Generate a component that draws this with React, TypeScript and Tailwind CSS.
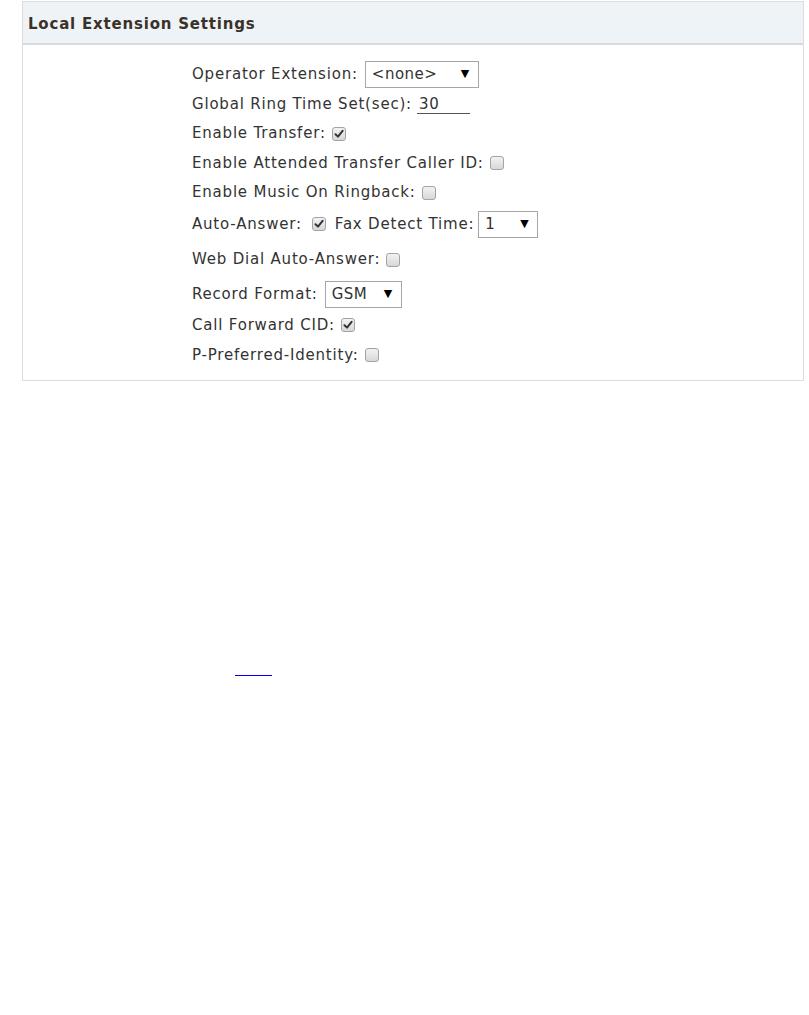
import React from "react";

function Box({ checked, gap = "ml-[6px]" }: { checked?: boolean; gap?: string }) {
  return (
    <span className={`${gap} inline-flex h-[14px] w-[14px] items-center justify-center rounded-[3px] border border-[#a3a3a3] bg-gradient-to-b from-[#f2f2f2] to-[#d8d8d8] align-middle`}>
      {checked && (
        <svg width="10" height="10" viewBox="0 0 10 10">
          <path d="M1.5 5.2 L4 7.6 L8.6 1.8" fill="none" stroke="#333" strokeWidth="2" strokeLinecap="round" strokeLinejoin="round" />
        </svg>
      )}
    </span>
  );
}

function Select({ value, width }: { value: string; width: string }) {
  return (
    <span className={`ml-[7px] inline-flex h-[27px] items-center justify-between border border-[#a6a6a6] bg-white pl-[6px] pr-[8px] tracking-[0.5px] ${width}`}>
      <span>{value}</span>
      <span className="text-[11px] text-black">▼</span>
    </span>
  );
}

export default function App() {
  return (
    <div className="min-h-[1015px] bg-white font-['DejaVu_Sans',Verdana,sans-serif] text-[15px] tracking-[0.8px] text-[#333]">
      <div className="pt-px pl-[22px] pr-[5px]">
        <div className="border border-[#dcdcdc]">
          <div className="flex h-[43px] items-center border-b-2 border-[#d8dbde] bg-[#eef3f7] pl-[5px] pt-[4px] text-[15px] font-bold tracking-[0.8px] text-[#3a3128]">
            Local Extension Settings
          </div>

          <div className="flex flex-col pt-[14px] pb-[10px] pl-[169px]">
            <div className="flex h-[30px] items-center">
              Operator Extension:
              <Select value="<none>" width="w-[114px]" />
            </div>
            <div className="flex h-[30px] items-center">
              Global Ring Time Set(sec):
              <span className="ml-[5px] w-[53px] border-b border-[#555] pl-[2px] leading-[18px]">30</span>
            </div>
            <div className="flex h-[29px] items-center">
              Enable Transfer:
              <Box checked />
            </div>
            <div className="flex h-[30px] items-center">
              Enable Attended Transfer Caller ID:
              <Box />
            </div>
            <div className="flex h-[29px] items-center">
              Enable Music On Ringback:
              <Box />
            </div>
            <div className="flex h-[34px] items-center">
              Auto-Answer:
              <Box checked gap="ml-[10px]" />
              <span className="ml-[9px]">Fax Detect Time:</span>
              <span className="-ml-[3px]">
                <Select value="1" width="w-[60px]" />
              </span>
            </div>
            <div className="flex h-[37px] items-center">
              Web Dial Auto-Answer:
              <Box />
            </div>
            <div className="flex h-[32px] items-center">
              Record Format:
              <Select value="GSM" width="w-[77px]" />
            </div>
            <div className="flex h-[30px] items-center">
              Call Forward CID:
              <Box checked />
            </div>
            <div className="flex h-[30px] items-center">
              P-Preferred-Identity:
              <Box />
            </div>
          </div>
        </div>
      </div>

      <div className="mt-[294px] ml-[235px] h-px w-[37px] bg-[#0000ee]" />
    </div>
  );
}
